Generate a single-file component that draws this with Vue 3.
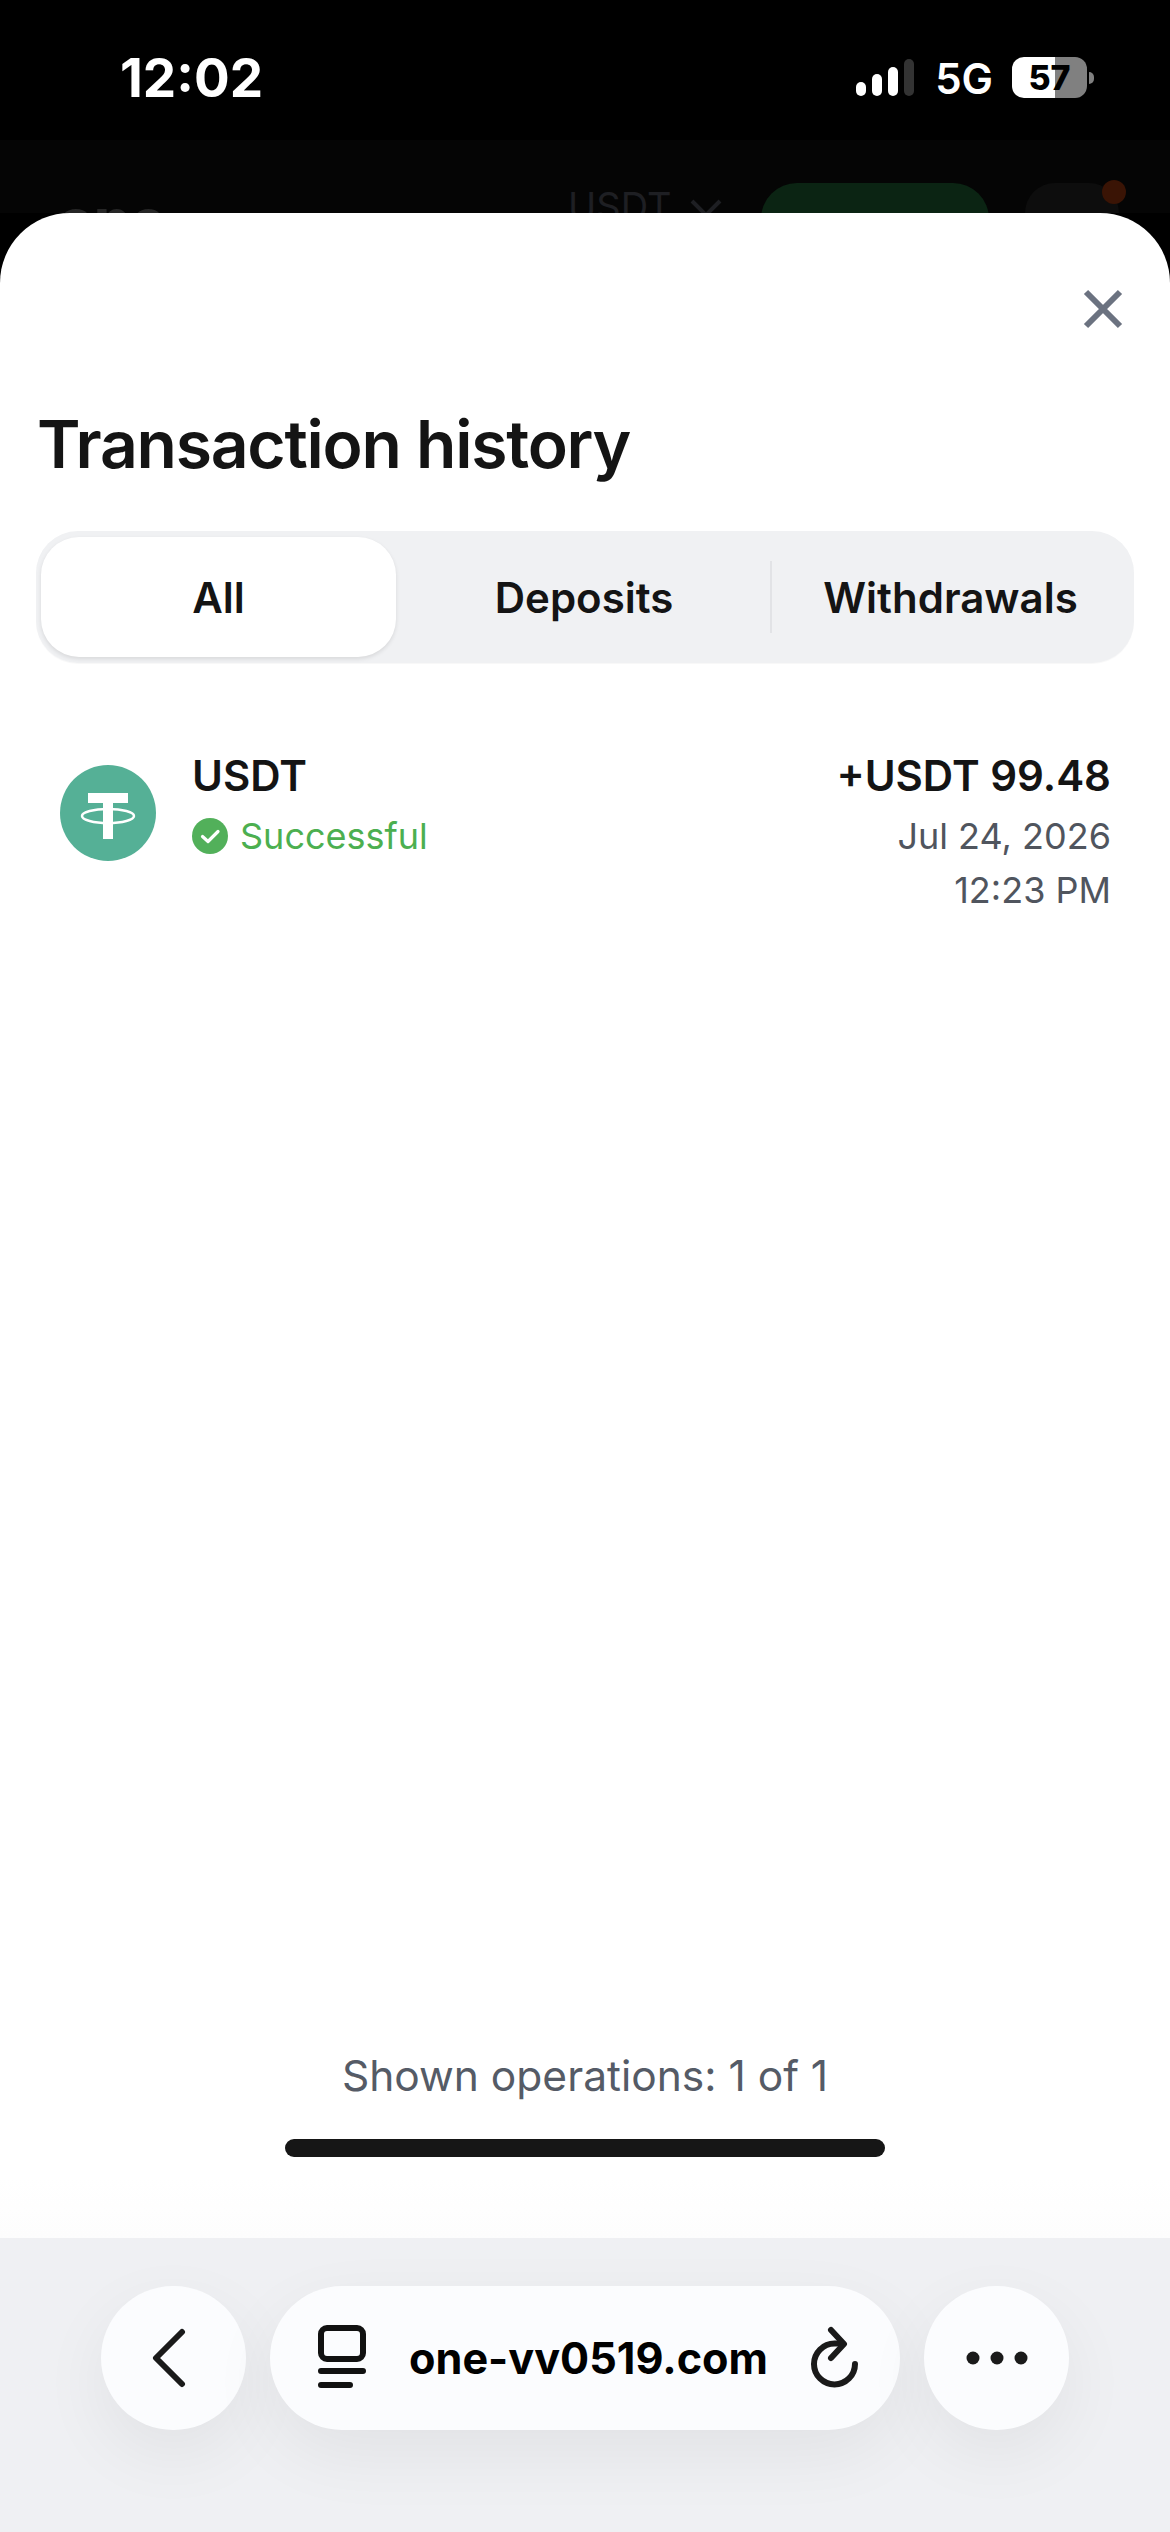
<script setup>
const tabs = [
  { label: 'All', active: true },
  { label: 'Deposits', active: false },
  { label: 'Withdrawals', active: false }
]
</script>

<template>
  <div class="screen">
    <header class="status">
      <span class="time">12:02</span>
      <div class="status-right">
        <div class="signal">
          <i class="b1"></i><i class="b2"></i><i class="b3"></i><i class="b4"></i>
        </div>
        <span class="net">5G</span>
        <div class="battery"><span>57</span></div>
        <div class="nub"></div>
      </div>
    </header>

    <div class="behind">
      <span class="logo">one</span>
      <span class="cur">USDT</span>
      <svg class="cur-chev" width="34" height="20" viewBox="0 0 34 20"><path d="M3 3l14 14L31 3" fill="none" stroke="#1e1f23" stroke-width="4"/></svg>
      <div class="green"></div>
      <div class="bell"><i class="dot"></i></div>
    </div>

    <main class="sheet">
      <button class="close" aria-label="Close">
        <svg width="42" height="42" viewBox="0 0 42 42"><path d="M4 4l34 34M38 4L4 38" stroke="#6b7280" stroke-width="6" fill="none"/></svg>
      </button>
      <h1>Transaction history</h1>

      <div class="tabs">
        <div v-for="t in tabs" :key="t.label" class="tab" :class="{ active: t.active }">{{ t.label }}</div>
      </div>

      <div class="row">
        <svg class="coin" width="96" height="96" viewBox="0 0 96 96">
          <circle cx="48" cy="48" r="48" fill="#55b096"/>
          <path d="M28 28h40v10H53v36H43V38H28z" fill="#fff"/>
          <ellipse cx="48" cy="51" rx="26" ry="7" fill="none" stroke="#fff" stroke-width="2.5"/>
        </svg>
        <div class="info">
          <div class="name">USDT</div>
          <div class="state">
            <svg width="36" height="36" viewBox="0 0 36 36">
              <circle cx="18" cy="18" r="18" fill="#52b05a"/>
              <path d="M10.5 18.5l5.5 5 10-10" fill="none" stroke="#fff" stroke-width="3.2" stroke-linecap="round" stroke-linejoin="round"/>
            </svg>
            <span>Successful</span>
          </div>
        </div>
        <div class="amount">
          <div class="sum">+USDT 99.48</div>
          <div class="meta">Jul 24, 2026</div>
          <div class="meta">12:23 PM</div>
        </div>
      </div>

      <div class="shown">Shown operations: 1 of 1</div>
      <div class="home"></div>
    </main>

    <footer class="browser">
      <button class="round back">
        <svg width="36" height="60" viewBox="0 0 36 60"><path d="M31 4L5 30l26 26" fill="none" stroke="#1a1a1a" stroke-width="6" stroke-linecap="round" stroke-linejoin="round"/></svg>
      </button>
      <div class="pill">
        <svg width="50" height="66" viewBox="0 0 50 66">
          <rect x="4" y="3" width="42" height="31" rx="6" fill="none" stroke="#111" stroke-width="6"/>
          <path d="M4 46h42M4 60h29" stroke="#111" stroke-width="6" stroke-linecap="round"/>
        </svg>
        <span class="url">one-vv0519.com</span>
        <svg width="50" height="66" viewBox="0 0 50 66">
          <path d="M45 39a20.500 20.500 0 1 1-20.500-20.500H31" fill="none" stroke="#1a1a1a" stroke-width="6" stroke-linecap="round"/>
          <path d="M21 5l13 14-13 14" fill="none" stroke="#1a1a1a" stroke-width="6" stroke-linecap="round" stroke-linejoin="round"/>
        </svg>
      </div>
      <button class="round">
        <svg width="62" height="14" viewBox="0 0 62 14"><circle cx="7" cy="7" r="6.500" fill="#1a1a1a"/><circle cx="31" cy="7" r="6.500" fill="#1a1a1a"/><circle cx="55" cy="7" r="6.500" fill="#1a1a1a"/></svg>
      </button>
    </footer>
  </div>
</template>

<style>
html, body { margin: 0; background: #000; }
</style>

<style scoped>
.screen {
  width: 1170px;
  height: 2532px;
  display: flex;
  flex-direction: column;
  overflow: hidden;
  background: #000;
  font-family: Inter, "Liberation Sans", sans-serif;
}
.status {
  height: 140px;
  flex: none;
  display: flex;
  align-items: center;
  justify-content: space-between;
  padding: 0 76px 0 120px;
  box-sizing: border-box;
  color: #fff;
}
.time { font-size: 53px; font-weight: 700; position: relative; top: 8px; letter-spacing: 0; }
.status-right { display: flex; align-items: center; }
.signal { display: flex; align-items: flex-end; gap: 6px; height: 37px; margin-top: 15px; }
.signal i { width: 10px; border-radius: 5px; background: #fff; display: block; }
.b1 { height: 14px; }
.b2 { height: 22px; }
.b3 { height: 29px; }
.signal .b4 { height: 37px; background: #333; }
.net { font-size: 42px; font-weight: 600; margin-left: 21px; margin-top: 16px; }
.battery {
  width: 75px; height: 41px; border-radius: 12px; margin-left: 19px; margin-top: 15px;
  background: linear-gradient(90deg, #fff 0 57%, #808080 57% 100%);
  color: #000; font-size: 34px; font-weight: 800;
  display: flex; align-items: center; justify-content: center;
}
.nub { width: 5px; height: 12px; margin-left: 2px; margin-top: 15px; background: #808080; border-radius: 0 6px 6px 0; }

.behind {
  height: 73px; flex: none; background: #050505; overflow: hidden;
  display: flex; align-items: flex-start; position: relative;
  padding-top: 43px; box-sizing: border-box;
}
.logo { font-size: 58px; font-weight: 800; color: #262626; margin-left: 58px; line-height: 1; margin-top: 8px; width: 510px; }
.cur { font-size: 38px; font-weight: 400; color: #1e1f23; line-height: 1; margin-top: 4px; }
.cur-chev { margin: 15px 0 0 18px; }
.green { width: 228px; height: 60px; border-radius: 36px 36px 0 0; background: #0b2413; margin-left: 38px; }
.bell { width: 94px; height: 60px; border-radius: 30px 30px 0 0; background: #0d0d0d; margin-left: 36px; position: relative; }
.dot { position: absolute; width: 24px; height: 24px; border-radius: 50%; background: #3a1405; left: 77px; top: -3px; display: block; }

.sheet {
  flex: 1; min-height: 0;
  background: #fff;
  border-radius: 70px 70px 0 0;
  display: flex; flex-direction: column;
  padding: 0 36px;
  box-sizing: border-box;
  position: relative;
  background-image: linear-gradient(180deg, #fff 97%, #fdfdfd 100%);
}
.close {
  align-self: flex-end;
  border: 0; padding: 0; background: none;
  margin: 75px 10px 0 0;
  width: 42px; height: 42px;
  display: block;
}
h1 {
  margin: 74px 0 0 1px;
  font-size: 66px; font-weight: 600; line-height: 80px;
  color: #141414; letter-spacing: -1.250px;
}
.tabs {
  margin-top: 47px; height: 132px; flex: none;
  background: #f0f1f3; border-radius: 42px;
  display: grid; grid-template-columns: 355px 376px 1fr;
  padding: 6px 5px; box-sizing: border-box;
  align-items: stretch;
  box-shadow: 0 1px 1px rgba(0,0,0,.03);
}
.tab {
  display: flex; align-items: center; justify-content: center;
  font-size: 42px; font-weight: 600; color: #141414; position: relative;
}
.tab:nth-child(2)::after {
  content: ""; position: absolute; right: 0; top: 24px; bottom: 24px; width: 2px; background: #e2e3e6;
}
.tab.active { background: #fff; border-radius: 38px; box-shadow: 0 2px 4px rgba(0,0,0,.1); }

.row { display: flex; margin-top: 86px; padding: 0 23px 0 24px; align-items: flex-start; }
.coin { margin-top: 16px; flex: none; }
.info { margin-left: 36px; flex: 1; }
.name { font-size: 42px; font-weight: 600; color: #141414; line-height: 54px; }
.state { display: flex; align-items: center; gap: 12px; color: #4caf50; font-size: 36px; margin-top: 6px; line-height: 54px; }
.amount { text-align: right; }
.sum { font-size: 42px; font-weight: 600; color: #141414; line-height: 54px; }
.meta { font-size: 36px; color: #50555e; line-height: 54px; }
.meta:nth-child(2) { margin-top: 6px; }

.shown { margin-top: auto; text-align: center; font-size: 42.500px; color: #555b66; line-height: 56px; }
.home { width: 600px; height: 18px; border-radius: 9px; background: #161616; align-self: center; margin: 35px 0 81px; flex: none; }

.browser {
  height: 294px; flex: none; background: #eff0f3;
  display: flex; gap: 24px; justify-content: center; padding-top: 48px; box-sizing: border-box;
}
.round, .pill {
  height: 144px; background: #fbfcfe; border: 0; border-radius: 72px; padding: 0;
  box-shadow: 0 24px 70px rgba(0,0,0,.06);
  display: flex; align-items: center;
}
.round { width: 145px; justify-content: center; }
.round.back { padding-right: 10px; box-sizing: border-box; }
.pill { width: 630px; padding: 0 40px 0 47px; box-sizing: border-box; justify-content: space-between; }
.url { font-size: 43.200px; font-weight: 700; color: #000; }
</style>
